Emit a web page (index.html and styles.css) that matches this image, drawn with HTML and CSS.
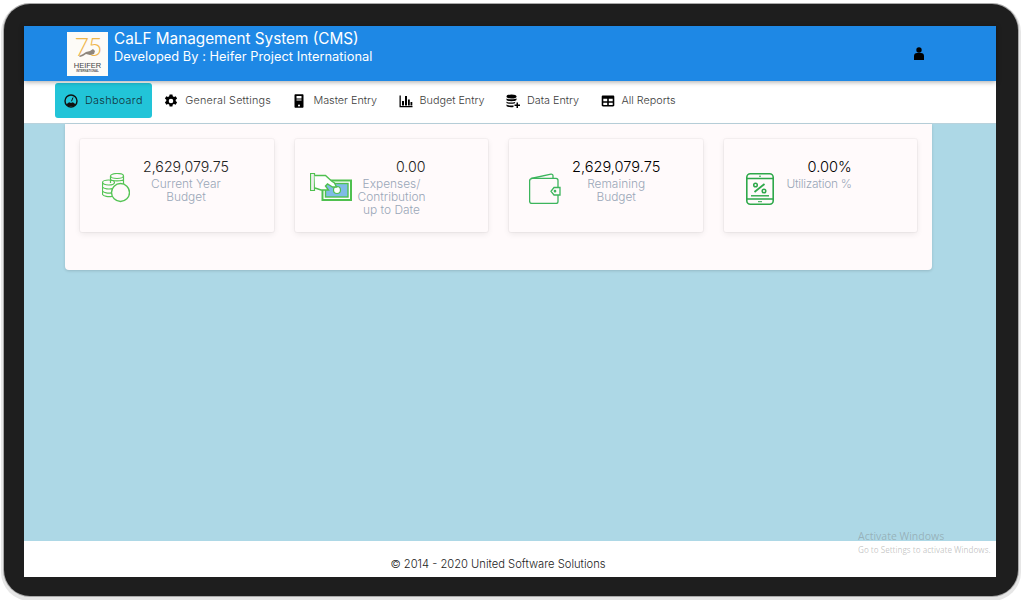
FILE: index.html
```html
<!DOCTYPE html>
<html lang="en">
<head>
<meta charset="utf-8">
<title>CaLF Management System</title>
<link rel="stylesheet" href="styles.css">
</head>
<body>
<div class="device">
  <div class="screen">
    <header class="topbar">
      <div class="logo">
        <svg viewBox="0 0 41 44" width="41" height="44">
          <rect width="41" height="44" fill="#fdfbf7"/>
          <text x="21" y="24" text-anchor="middle" class="logo-num">75</text>
          <path d="M12 24l4-2 3-2 4-1 3-2 2 2-1 3-4 1-4-1-3 2-3 1z" fill="#8f877d"/>
          <text x="20.500" y="36" text-anchor="middle" class="logo-name">HEIFER</text>
          <text x="20.500" y="40" text-anchor="middle" class="logo-sub">INTERNATIONAL</text>
        </svg>
      </div>
      <div class="brand">
        <div class="brand-title">CaLF Management System (CMS)</div>
        <div class="brand-sub">Developed By : Heifer Project International</div>
      </div>
      <svg class="user" viewBox="0 0 10 13" width="10" height="13"><circle cx="5" cy="3" r="2.700"/><path d="M0 13V9c0-2 1.200-3 3-3h4c1.800 0 3 1 3 3v4z"/></svg>
    </header>
    <nav class="nav">
      <a class="nav-item active">
        <svg class="nav-icon" viewBox="0 0 14 14"><circle cx="7" cy="7" r="6" fill="none" stroke="#111" stroke-width="1.400"/><path d="M2.500 10.500a4.800 4 0 0 1 9 0l-1.500 1.500H4z" fill="#111"/><path d="M7 8.500l2-5" stroke="#111" stroke-width="1"/><circle cx="7" cy="8" r="1" fill="#22c4d8"/></svg>
        <span>Dashboard</span>
      </a>
      <a class="nav-item wide">
        <svg class="nav-icon" viewBox="0 0 14 14"><path fill-rule="evenodd" fill="#000" d="M5.600.5h2.800l.4 1.800 1.200.6 1.700-.7 1.400 2.400-1.400 1.200v1.300l1.400 1.200-1.400 2.400-1.700-.7-1.200.6-.4 1.900H5.600l-.4-1.900-1.200-.6-1.700.7L.9 8.300l1.400-1.200V5.800L.9 4.600l1.400-2.400 1.700.7 1.200-.6zM7 4.700a2.300 2.300 0 1 0 0 4.600 2.300 2.300 0 0 0 0-4.600z"/></svg>
        <span>General Settings</span>
      </a>
      <a class="nav-item">
        <svg class="nav-icon" viewBox="0 0 14 14"><path fill-rule="evenodd" fill="#000" d="M3.500.3h7c.6 0 1 .4 1 1v11.400c0 .6-.4 1-1 1h-7c-.6 0-1-.4-1-1V1.300c0-.6.4-1 1-1zM4.500 2v2.600h5V2zm0 3.600v.8h5v-.8zM7 10.500a1 1 0 1 0 0 2 1 1 0 0 0 0-2z"/></svg>
        <span>Master Entry</span>
      </a>
      <a class="nav-item">
        <svg class="nav-icon" viewBox="0 0 14 14"><path fill="#000" d="M.5 1.500h1.300V12h11.700v1.300H.5zM3 7h2v4.500H3zm3-5h2v9.500H6zm3 3.500h1.800v6H9zm2.500 2.500h1.800v3.500h-1.800z"/></svg>
        <span>Budget Entry</span>
      </a>
      <a class="nav-item">
        <svg class="nav-icon" viewBox="0 0 14 14"><ellipse cx="5.500" cy="2.500" rx="5" ry="2" fill="#000"/><path fill="#000" d="M.5 4.200c1 1.500 9 1.500 10 0v1.800c-1 1.600-9 1.600-10 0zm0 3.200c1 1.500 8 1.500 9 .4l-1 1.600C5 10 1.500 9.800.5 9zm0 3.100c1 1 5 1.200 7 .8v1.700c-3 .5-6 0-7-1zM10.500 8.500h1.500v2h2V12h-2v2h-1.500v-2h-2v-1.500h2z"/></svg>
        <span>Data Entry</span>
      </a>
      <a class="nav-item">
        <svg class="nav-icon" viewBox="0 0 14 14"><path fill-rule="evenodd" fill="#000" d="M2 1.500h10c.8 0 1.300.5 1.300 1.200v8.600c0 .7-.5 1.200-1.300 1.200H2c-.8 0-1.300-.5-1.300-1.200V2.700C.7 2 1.200 1.500 2 1.500zM2.300 4.800v2.500h3.900V4.800zm5.500 0v2.500h3.900V4.800zM2.300 8.700v2.300h3.900V8.700zm5.500 0v2.300h3.900V8.700z"/></svg>
        <span>All Reports</span>
      </a>
    </nav>
    <main class="main">
      <section class="panel">
        <article class="card">
          <div class="card-icon">
            <svg viewBox="0 0 28 30" width="28" height="30" fill="none" stroke="#55c455" stroke-width="1.200">
              <ellipse cx="15" cy="3" rx="6.500" ry="2.500"/><path d="M8.500 3v7M21.500 3v8M8.500 6.500c1 1.800 12 1.800 13 0"/>
              <ellipse cx="6.500" cy="9.500" rx="6" ry="2.500"/><path d="M.5 9.500v12c1 2 6 2.500 9.500 2M.5 14c1 2 7 2.500 10 1.500M.5 18c1 2 6 2.500 9 1.800"/>
              <circle cx="18.500" cy="19.500" r="9" stroke-width="1.400" fill="#fffafb"/>
            </svg>
          </div>
          <div class="card-text">
            <div class="value">2,629,079.75</div>
            <div class="label">Current Year<br>Budget</div>
          </div>
        </article>
        <article class="card">
          <div class="card-icon">
            <svg viewBox="0 0 42 28" width="42" height="28" fill="none">
              <rect x="12.500" y="7.500" width="28.500" height="19.500" fill="#fff" stroke="#4fc04f" stroke-width="2"/>
              <rect x="15.500" y="10.500" width="22.500" height="13.500" fill="#7fbbe6" stroke="#4fc04f" stroke-width="1.400"/>
              <circle cx="27" cy="17" r="3.500" fill="#fff" stroke="#4fc04f" stroke-width="1.200"/>
              <path d="M.5.500h4v17h-4z" fill="#eee" stroke="#4fc04f" stroke-width="1.200"/>
              <path d="M4.500 2.500h11l6 5.500 3 2 2 4-4 0-5-3-2 2 3 4H11l-6-2" fill="#fff" stroke="#4fc04f" stroke-width="1.400"/>
            </svg>
          </div>
          <div class="card-text">
            <div class="value">0.00</div>
            <div class="label">Expenses/<br>Contribution<br>up to Date</div>
          </div>
        </article>
        <article class="card">
          <div class="card-icon">
            <svg viewBox="0 0 32 31" width="32" height="31" fill="none" stroke="#3cb55c" stroke-width="1.300">
              <path d="M2 5.500L22 1.200c1-.2 2 .4 2 1.500v2.500"/>
              <path d="M29 15V7.500c0-1.300-.8-2.200-2-2.200H3.500C1.800 5.300.6 6.300.6 8v20c0 1.500 1 2.500 2.400 2.500h24c1.300 0 2-.8 2-2V22"/>
              <path d="M25 14.500h6v7.500h-6l-3-3.700z"/>
              <circle cx="26" cy="18.200" r=".7" fill="#3cb55c"/>
            </svg>
          </div>
          <div class="card-text">
            <div class="value dark">2,629,079.75</div>
            <div class="label">Remaining<br>Budget</div>
          </div>
        </article>
        <article class="card">
          <div class="card-icon">
            <svg viewBox="0 0 28 32" width="28" height="32" fill="none" stroke="#2ea84a" stroke-width="1.600">
              <rect x=".8" y=".8" width="26.400" height="30.400" rx="3.500"/>
              <path d="M1 5.500h26M1 26h26" stroke-width="1.300"/>
              <path d="M13 3.200h2M12 28.700h4" stroke-width="1"/>
              <path d="M8.500 19l10-8" stroke-width="1.800"/>
              <circle cx="9.500" cy="12" r="1.800" stroke-width="1.500"/><circle cx="18" cy="18" r="1.800" stroke-width="1.500"/>
              <path d="M5 22.800h18" stroke-width="1.400"/>
            </svg>
          </div>
          <div class="card-text">
            <div class="value dark">0.00%</div>
            <div class="label tight">Utilization %</div>
          </div>
        </article>
      </section>
    </main>
    <footer class="footer">© 2014 - 2020 United Software Solutions</footer>
    <div class="watermark">
      <div class="wm-title">Activate Windows</div>
      <div class="wm-sub">Go to Settings to activate Windows.</div>
    </div>
  </div>
</div>
</body>
</html>
```

FILE: styles.css
```css
* { box-sizing: border-box; }
html, body { margin: 0; height: 100%; background: #fff; overflow: hidden; }
body { padding: 4px 6px 4px 4px; font-family: Inter, "Noto Sans", sans-serif; }
.device {
  height: 592px;
  background: #1e1e1e;
  border-radius: 26px;
  padding: 22px 22px 19px 20px;
  box-shadow: 0 0 0 1px #a9a9a9, 0 2px 0 3px #e6e6e6;
}
.screen { position: relative; height: 100%; display: flex; flex-direction: column; background: #add8e6; }
.topbar {
  height: 55px;
  flex: none;
  background: #1e88e5;
  display: flex;
  align-items: center;
  padding: 0 72px 0 43px;
  position: relative;
  z-index: 2;
  box-shadow: 0 1px 5px rgba(0,0,0,.35);
}
.logo { width: 41px; height: 44px; flex: none; margin: 1px 6px 0 0; }
.logo svg { display: block; }
.logo-num { font: 300 25px Lato, sans-serif; letter-spacing: -1px; fill: #efb64a; }
.logo-name { font: 400 7.500px "Liberation Sans", sans-serif; fill: #444; }
.logo-sub { font: 700 2.800px "Liberation Sans", sans-serif; fill: #555; }
.brand { color: #fff; flex: 1; margin-top: -14px; }
.brand-title { font-size: 15.300px; line-height: 19px; font-weight: 400; }
.brand-sub { font-size: 12.800px; line-height: 17px; font-weight: 400; letter-spacing: .05px; }
.user { fill: #000; flex: none; }
.nav { height: 43px; flex: none; background: #fff; display: flex; padding: 2px 0 0 31px; border-bottom: 1px solid #b9d2dc; }
.nav-item {
  height: 35px;
  display: flex;
  align-items: center;
  gap: 7px;
  padding: 0 9px;
  margin-right: 3.500px;
  border-radius: 3px;
  font-size: 10.800px;
  font-weight: 300;
  color: #3c3c3c;
}
.nav-item.active { background: #22c4d8; color: #12323a; letter-spacing: .33px; }
.nav-item.wide { letter-spacing: .2px; }
.nav-icon { width: 14px; height: 14px; flex: none; }
.main { flex: 1; padding: 0 64px 0 41px; }
.panel {
  height: 146px;
  background: #fffafb;
  border-radius: 0 0 4px 4px;
  box-shadow: 0 1px 3px rgba(0,0,0,.15);
  padding: 15px 15px 0;
  display: grid;
  grid-template-columns: repeat(4, 193.500px);
  justify-content: space-between;
  align-items: start;
}
.card {
  height: 93px;
  display: flex;
  gap: 6px;
  padding: 19px 0 0 15px;
  background: #fffafb;
  border-radius: 2px;
  box-shadow: 0 2px 6px rgba(0,0,0,.08), 0 0 0 1px rgba(0,0,0,.03);
}
.card-icon { width: 42px; flex: none; margin-top: 15px; display: flex; justify-content: center; }
.card-icon svg { display: block; }
.value { font-size: 14.200px; line-height: 18px; font-weight: 300; color: #222; text-align: right; margin-bottom: 1px; }
.value.dark { font-size: 14.600px; font-weight: 300; color: #000; }
.label { font-size: 11.900px; line-height: 13px; font-weight: 300; color: #9aa7b8; text-align: center; }
.label.tight { letter-spacing: -.25px; }
.footer { height: 36px; flex: none; background: #fff; display: flex; align-items: center; justify-content: center; padding: 10px 24px 0 0; font-size: 11.200px; font-weight: 300; color: #222; }
.watermark { position: absolute; left: 834px; top: 503px; color: rgba(120,120,120,.42); font-family: "Open Sans", sans-serif; white-space: nowrap; }
.wm-title { font-size: 10.500px; line-height: 15px; }
.wm-sub { font-size: 8.100px; line-height: 12px; }
```
